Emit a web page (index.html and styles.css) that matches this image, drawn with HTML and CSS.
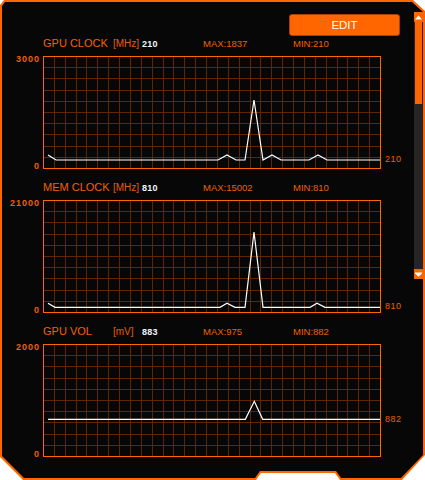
FILE: index.html
```html
<!DOCTYPE html>
<html>
<head>
<meta charset="utf-8">
<link rel="stylesheet" href="styles.css">
</head>
<body>
<div class="frame">
  <div class="panel">
    <div class="content">
      <div class="toolbar"><button class="edit">EDIT</button></div>
      <div class="charts">
        <section class="chart">
          <div class="head"><span class="title">GPU CLOCK</span><span class="unit">[MHz]</span><span class="val">210</span><span class="stat">MAX:1837</span><span class="stat">MIN:210</span></div>
          <div class="yaxis"><span>3000</span><span>0</span></div>
          <svg class="plot" viewBox="0 0 338 113">
            <defs>
              <path id="grid" d="M11.5 0V113M22.5 0V113M33.5 0V113M43.5 0V113M54.5 0V113M65.5 0V113M76.5 0V113M87.5 0V113M98.5 0V113M109.5 0V113M120.5 0V113M130.5 0V113M141.5 0V113M152.5 0V113M163.5 0V113M174.5 0V113M185.5 0V113M196.5 0V113M207.5 0V113M217.5 0V113M228.5 0V113M239.5 0V113M250.5 0V113M261.5 0V113M272.5 0V113M283.5 0V113M294.5 0V113M304.5 0V113M315.5 0V113M326.5 0V113M0 11.5H338M0 22.5H338M0 34.5H338M0 45.5H338M0 56.5H338M0 67.5H338M0 78.5H338M0 90.5H338M0 101.5H338"/>
            </defs>
            <use href="#grid" class="gridlines"/>
            <rect class="border" x="0.5" y="0.5" width="337" height="112"/>
            <polyline class="line" points="5,99 13,104 175,104 184,99 193,104 202,104 211,44 220,104 229,99 238,104 266,104 275,99 284,104 337,104"/>
          </svg>
          <div class="cur" style="padding-bottom:5px">210</div>
        </section>
        <section class="chart">
          <div class="head"><span class="title">MEM CLOCK</span><span class="unit">[MHz]</span><span class="val">810</span><span class="stat">MAX:15002</span><span class="stat">MIN:810</span></div>
          <div class="yaxis"><span>21000</span><span>0</span></div>
          <svg class="plot" viewBox="0 0 338 113">
            <use href="#grid" class="gridlines"/>
            <rect class="border" x="0.5" y="0.5" width="337" height="112"/>
            <polyline class="line" points="5,103.3 12,107.3 177,107.3 184,103.3 192,107.3 202,107.3 211,32 220,107.3 267,107.3 274,103.3 282,107.3 337,107.3"/>
          </svg>
          <div class="cur" style="padding-bottom:2px">810</div>
        </section>
        <section class="chart">
          <div class="head"><span class="title">GPU VOL</span><span class="unit">[mV]</span><span class="val">883</span><span class="stat">MAX:975</span><span class="stat">MIN:882</span></div>
          <div class="yaxis"><span>2000</span><span>0</span></div>
          <svg class="plot" viewBox="0 0 338 113">
            <use href="#grid" class="gridlines"/>
            <rect class="border" x="0.5" y="0.5" width="337" height="112"/>
            <polyline class="line" points="5,75.3 202.3,75.3 211.3,57.3 219.7,75.3 337,75.3"/>
          </svg>
          <div class="cur" style="padding-bottom:33px">882</div>
        </section>
      </div>
    </div>
    <div class="scroll">
      <div class="arrow"><svg width="7" height="5" viewBox="0 0 7 5"><path d="M0 4.5L3.5 0.5L7 4.5Z" fill="#fff"/></svg></div>
      <div class="thumb"></div>
      <div class="track"></div>
      <div class="arrow"><svg width="7" height="5" viewBox="0 0 7 5"><path d="M0 0.5H7V1.5L3.5 4.8L0 1.5Z" fill="#fff"/></svg></div>
    </div>
  </div>
</div>
</body>
</html>
```
FILE: styles.css
```css
html, body {
  margin: 0;
  background: #ffffff;
}

.frame {
  width: 425px;
  height: 480px;
  box-sizing: border-box;
  padding: 2px;
  background: #ff6600;
  clip-path: polygon(4px 0, 413px 0, 425px 11px, 425px 455px, 402px 480px, 340px 480px, 335px 473px, 261px 473px, 256px 480px, 23px 480px, 0 457px, 0 5px);
}

.panel {
  height: 100%;
  display: flex;
  background: #070707;
  clip-path: polygon(3px 0, 410px 0, 421px 10px, 421px 453px, 399px 476px, 339px 476px, 334px 469px, 258px 469px, 253px 476px, 22px 476px, 0 454px, 0 4px);
}

.content {
  width: 412px;
  font-family: "Liberation Sans", Arial, sans-serif;
  color: #f06000;
}

.toolbar {
  display: flex;
  padding: 12px 0 0 287px;
}

.edit {
  width: 111px;
  height: 22px;
  box-sizing: border-box;
  margin: 0;
  padding: 0;
  display: flex;
  align-items: center;
  justify-content: center;
  background: #ff6600;
  border: 1px solid #a84300;
  border-radius: 3px;
  color: #ffffff;
  font-family: "Liberation Sans", Arial, sans-serif;
  font-size: 11.5px;
}

.charts {
  display: flex;
  flex-direction: column;
  gap: 12px;
  margin-top: 1px;
}

.chart {
  display: grid;
  grid-template-columns: 41px 338px 33px;
  grid-template-rows: 12px 113px;
  row-gap: 7px;
}

.head {
  grid-column: 2 / 4;
  display: grid;
  grid-template-columns: 70px 29px 61px 90px auto;
  align-items: baseline;
  line-height: 12px;
  white-space: nowrap;
}

.title {
  font-size: 11px;
  color: #f26200;
}

.unit {
  font-size: 10px;
  color: #e85d00;
}

.val {
  font-size: 9px;
  font-weight: bold;
  color: #eef6ff;
  letter-spacing: 0.3px;
}

.stat {
  font-size: 9.5px;
  color: #f06000;
}

.yaxis {
  display: flex;
  flex-direction: column;
  justify-content: space-between;
  align-items: flex-end;
  padding-right: 3px;
  margin: -1px 0 -2px;
  font-size: 9px;
  font-weight: bold;
  line-height: 9px;
  letter-spacing: 1px;
  color: #f06000;
}

.plot {
  display: block;
  width: 338px;
  height: 113px;
}

.gridlines {
  stroke: #5e2700;
  stroke-width: 1;
  fill: none;
  shape-rendering: crispEdges;
}

.border {
  fill: none;
  stroke: #ff6600;
  stroke-width: 1;
  shape-rendering: crispEdges;
}

.line {
  fill: none;
  stroke: #ffffff;
  stroke-width: 1.2;
  stroke-linejoin: miter;
}

.cur {
  display: flex;
  flex-direction: column;
  justify-content: flex-end;
  padding-left: 4px;
  font-size: 9px;
  line-height: 9px;
  letter-spacing: 0.5px;
  color: #f06000;
}

.scroll {
  width: 9px;
  height: 267px;
  margin-top: 10px;
  display: flex;
  flex-direction: column;
  background: #252525;
}

.arrow {
  height: 10px;
  flex: none;
  display: flex;
  align-items: center;
  justify-content: center;
  background: #ff6600;
}

.arrow svg {
  display: block;
}

.thumb {
  height: 82px;
  flex: none;
  margin: 0 1px;
  background: #ff6600;
}

.track {
  flex: 1;
}
```
